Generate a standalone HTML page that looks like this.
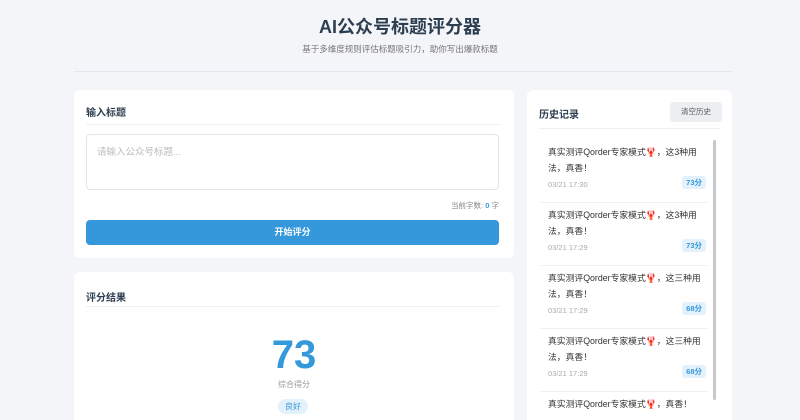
<html style="height:420px;overflow:hidden"><head><style>
*{margin:0;padding:0;box-sizing:border-box}
body{width:800px;height:420px;overflow:hidden;background:#f4f5f9;font-family:"Liberation Sans","Noto Sans CJK SC",sans-serif;position:relative;color:#2c3e50}
.a{position:absolute}
.card{position:absolute;background:#fff;border-radius:6px;overflow:hidden}
.h{font-size:10px;font-weight:bold;color:#2c3e50}
.item{position:absolute;left:540px;width:168px;border-bottom:1px solid #eef0f4;font-size:8.8px;line-height:16px;color:#333;overflow:hidden}
.item .d{position:absolute;left:8px;top:37px;font-size:7.5px;color:#aaa}
.item .s{position:absolute;right:2px;top:36px;font-size:7.5px;color:#3498db;background:#e3f1fc;border-radius:3px;padding:0 4px;line-height:13px;font-weight:bold}
.item .t{position:absolute;left:8px;top:4px;width:160px}
.r{color:#e74c3c}
</style></head><body>
<div class="a" style="top:13px;width:800px;text-align:center;font-size:18px;font-weight:bold;color:#2c3e50">AI公众号标题评分器</div>
<div class="a" style="top:43px;width:800px;text-align:center;font-size:8.5px;color:#777">基于多维度规则评估标题吸引力，助你写出爆款标题</div>
<div class="a" style="top:71px;left:74px;width:658px;height:1px;background:#e3e6ec"></div>

<div class="card" style="left:74px;top:90px;width:440px;height:168px">
<div class="a h" style="left:12px;top:14px">输入标题</div>
<div class="a" style="left:12px;top:34px;width:414px;height:1px;background:#eef0f4"></div>
<div class="a" style="left:12px;top:44px;width:413px;height:56px;border:1px solid #e1e4ea;border-radius:4px;font-size:9.5px;color:#bbb;padding:9px 10px">请输入公众号标题...</div>
<div class="a" style="right:15px;top:110px;font-size:7.5px;color:#888">当前字数: <b style="color:#3498db">0</b> 字</div>
<div class="a" style="left:12px;top:130px;width:413px;height:25px;background:#3498db;border-radius:4px;color:#fff;font-size:9px;font-weight:bold;text-align:center;line-height:25px">开始评分</div>
</div>

<div class="card" style="left:74px;top:272px;width:440px;height:148px;border-radius:6px 6px 0 0">
<div class="a h" style="left:12px;top:17px">评分结果</div>
<div class="a" style="left:12px;top:34px;width:414px;height:1px;background:#eef0f4"></div>
<div class="a" style="left:0;top:62px;width:440px;text-align:center;font-size:40px;font-weight:bold;color:#3498db;line-height:42px">73</div>
<div class="a" style="left:0;top:107px;width:440px;text-align:center;font-size:8px;color:#999">综合得分</div>
<div class="a" style="left:204px;top:127px;width:30px;height:15px;background:#e3f1fc;border-radius:8px;text-align:center;font-size:8px;line-height:15px;color:#3498db">良好</div>
</div>

<div class="card" style="left:527px;top:90px;width:205px;height:330px;border-radius:6px 6px 0 0">
<div class="a h" style="left:12px;top:16px">历史记录</div>
<div class="a" style="left:143px;top:12px;width:52px;height:20px;background:#eceef2;border-radius:3px;font-size:7.5px;color:#555;text-align:center;line-height:20px">清空历史</div>
<div class="a" style="left:12px;top:38px;width:182px;height:1px;background:#eef0f4"></div>
<div class="a" style="left:186px;top:50px;width:3px;height:260px;background:#c6c8cc;border-radius:2px"></div>
</div>
<div class="item" style="top:140px;height:63px"><div class="t">真实测评Qorder专家模式<span class="r">🦞</span>，这3种用法，真香！</div><div class="d">03/21 17:30</div><div class="s">73分</div></div>
<div class="item" style="top:203px;height:63px"><div class="t">真实测评Qorder专家模式<span class="r">🦞</span>，这3种用法，真香！</div><div class="d">03/21 17:29</div><div class="s">73分</div></div>
<div class="item" style="top:266px;height:63px"><div class="t">真实测评Qorder专家模式<span class="r">🦞</span>，这三种用法，真香！</div><div class="d">03/21 17:29</div><div class="s">68分</div></div>
<div class="item" style="top:329px;height:63px"><div class="t">真实测评Qorder专家模式<span class="r">🦞</span>，这三种用法，真香！</div><div class="d">03/21 17:29</div><div class="s">68分</div></div>
<div class="item" style="top:392px;height:28px;border-bottom:none"><div class="t">真实测评Qorder专家模式<span class="r">🦞</span>，真香！</div></div>
</body></html>
